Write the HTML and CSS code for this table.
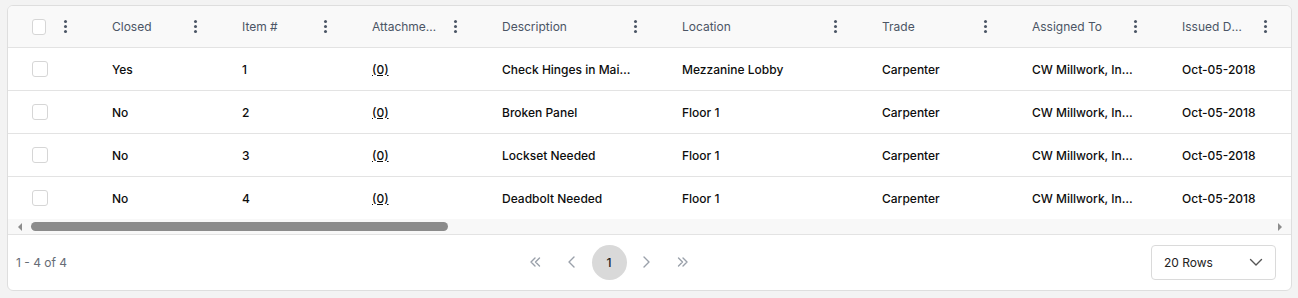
FILE: index.html
```html
<!DOCTYPE html>
<html lang="en">
<head>
    <meta charset="UTF-8">
    <meta name="viewport" content="width=device-width, initial-scale=1.0">
    <title>Punch List</title>
    <link rel="stylesheet" href="styles.css">
</head>
<body>
    <div class="card">
        <div class="table-wrap">
            <table class="grid">
                <colgroup>
                    <col class="w-check">
                    <col class="w-130">
                    <col class="w-130">
                    <col class="w-130">
                    <col class="w-180">
                    <col class="w-200">
                    <col class="w-150">
                    <col class="w-150">
                    <col class="w-130">
                    <col class="w-130">
                    <col class="w-150">
                    <col class="w-150">
                    <col class="w-200">
                </colgroup>
                <thead>
                    <tr>
                        <th class="check-cell">
                            <div class="head">
                                <span class="checkbox"></span>
                                <span class="dots"><i></i><i></i><i></i></span>
                            </div>
                        </th>
                        <th><div class="head"><span class="label">Closed</span><span class="dots"><i></i><i></i><i></i></span></div></th>
                        <th><div class="head"><span class="label">Item #</span><span class="dots"><i></i><i></i><i></i></span></div></th>
                        <th><div class="head"><span class="label">Attachments</span><span class="dots"><i></i><i></i><i></i></span></div></th>
                        <th><div class="head"><span class="label">Description</span><span class="dots"><i></i><i></i><i></i></span></div></th>
                        <th><div class="head"><span class="label">Location</span><span class="dots"><i></i><i></i><i></i></span></div></th>
                        <th><div class="head"><span class="label">Trade</span><span class="dots"><i></i><i></i><i></i></span></div></th>
                        <th><div class="head"><span class="label">Assigned To</span><span class="dots"><i></i><i></i><i></i></span></div></th>
                        <th><div class="head"><span class="label">Issued Date</span><span class="dots"><i></i><i></i><i></i></span></div></th>
                        <th><div class="head"><span class="label">Due Date</span><span class="dots"><i></i><i></i><i></i></span></div></th>
                        <th><div class="head"><span class="label">Status</span><span class="dots"><i></i><i></i><i></i></span></div></th>
                        <th><div class="head"><span class="label">Priority</span><span class="dots"><i></i><i></i><i></i></span></div></th>
                        <th><div class="head"><span class="label">Notes</span><span class="dots"><i></i><i></i><i></i></span></div></th>
                    </tr>
                </thead>
                <tbody>
                    <tr>
                        <td class="check-cell"><span class="checkbox"></span></td>
                        <td>Yes</td>
                        <td>1</td>
                        <td><a href="#" class="link">(0)</a></td>
                        <td>Check Hinges in Main Entrance</td>
                        <td>Mezzanine Lobby</td>
                        <td>Carpenter</td>
                        <td>CW Millwork, Inc. (Millwork)</td>
                        <td>Oct-05-2018</td>
                        <td>Oct-19-2018</td>
                        <td>Closed</td>
                        <td>Normal</td>
                        <td></td>
                    </tr>
                    <tr>
                        <td class="check-cell"><span class="checkbox"></span></td>
                        <td>No</td>
                        <td>2</td>
                        <td><a href="#" class="link">(0)</a></td>
                        <td>Broken Panel</td>
                        <td>Floor 1</td>
                        <td>Carpenter</td>
                        <td>CW Millwork, Inc. (Millwork)</td>
                        <td>Oct-05-2018</td>
                        <td>Oct-19-2018</td>
                        <td>Open</td>
                        <td>Normal</td>
                        <td></td>
                    </tr>
                    <tr>
                        <td class="check-cell"><span class="checkbox"></span></td>
                        <td>No</td>
                        <td>3</td>
                        <td><a href="#" class="link">(0)</a></td>
                        <td>Lockset Needed</td>
                        <td>Floor 1</td>
                        <td>Carpenter</td>
                        <td>CW Millwork, Inc. (Millwork)</td>
                        <td>Oct-05-2018</td>
                        <td>Oct-19-2018</td>
                        <td>Open</td>
                        <td>Normal</td>
                        <td></td>
                    </tr>
                    <tr>
                        <td class="check-cell"><span class="checkbox"></span></td>
                        <td>No</td>
                        <td>4</td>
                        <td><a href="#" class="link">(0)</a></td>
                        <td>Deadbolt Needed</td>
                        <td>Floor 1</td>
                        <td>Carpenter</td>
                        <td>CW Millwork, Inc. (Millwork)</td>
                        <td>Oct-05-2018</td>
                        <td>Oct-19-2018</td>
                        <td>Open</td>
                        <td>Normal</td>
                        <td></td>
                    </tr>
                </tbody>
            </table>
        </div>

        <!-- fake horizontal scrollbar -->
        <div class="hscroll">
            <span class="arrow arrow-left"></span>
            <div class="track"><div class="thumb"></div></div>
            <span class="arrow arrow-right"></span>
        </div>

        <div class="footer">
            <div class="count">1 - 4 of 4</div>
            <div class="pager">
                <button class="page-btn" title="First">
                    <svg width="14" height="14" viewBox="0 0 14 14"><path d="M7 3 3 7 7 11M11.5 3 7.5 7 11.5 11" fill="none" stroke="currentColor" stroke-width="1.4" stroke-linecap="round" stroke-linejoin="round"/></svg>
                </button>
                <button class="page-btn" title="Previous">
                    <svg width="14" height="14" viewBox="0 0 14 14"><path d="M9 2 4 7 9 12" fill="none" stroke="currentColor" stroke-width="1.4" stroke-linecap="round" stroke-linejoin="round"/></svg>
                </button>
                <button class="page-btn current">1</button>
                <button class="page-btn" title="Next">
                    <svg width="14" height="14" viewBox="0 0 14 14"><path d="M5 2 10 7 5 12" fill="none" stroke="currentColor" stroke-width="1.4" stroke-linecap="round" stroke-linejoin="round"/></svg>
                </button>
                <button class="page-btn" title="Last">
                    <svg width="14" height="14" viewBox="0 0 14 14"><path d="M2.5 3 6.5 7 2.5 11M7 3 11 7 7 11" fill="none" stroke="currentColor" stroke-width="1.4" stroke-linecap="round" stroke-linejoin="round"/></svg>
                </button>
            </div>
            <div class="rows-select">
                <span>20 Rows</span>
                <svg width="14" height="14" viewBox="0 0 14 14"><path d="M1.5 4.5 7 10 12.5 4.5" fill="none" stroke="currentColor" stroke-width="1.4" stroke-linecap="round" stroke-linejoin="round"/></svg>
            </div>
        </div>
    </div>
</body>
</html>
```

FILE: styles.css
```css
* {
    box-sizing: border-box;
}
body {
    font-family: Inter, 'Noto Sans', sans-serif;
    font-size: 12px;
    margin: 0;
    padding: 5px 6px 0 7px;
    background-color: #f3f3f3;
    color: #111;
}
.card {
    background-color: #fff;
    border: 1px solid #dedede;
    border-radius: 6px;
    overflow: hidden;
}
.table-wrap {
    overflow: hidden;
}
.grid {
    border-collapse: separate;
    border-spacing: 0;
    table-layout: fixed;
    width: 1910px;
}
.w-check { width: 80px; }
.w-130 { width: 130px; }
.w-150 { width: 150px; }
.w-180 { width: 180px; }
.w-200 { width: 200px; }
th {
    height: 42px;
    padding: 0 20px 0 24px;
    background-color: #f9f9f9;
    border-bottom: 1px solid #e3e3e3;
    font-weight: 400;
    text-align: left;
    color: #4b5565;
}
.head {
    display: flex;
    align-items: center;
    gap: 16px;
}
.head .label {
    flex: 1;
    min-width: 0;
    white-space: nowrap;
    overflow: hidden;
    text-overflow: ellipsis;
}
.check-cell .head {
    gap: 18px;
}
.dots {
    display: flex;
    flex-direction: column;
    gap: 2px;
    width: 4px;
    flex-shrink: 0;
}
.dots i {
    display: block;
    width: 3px;
    height: 3px;
    border-radius: 50%;
    background-color: #4b5565;
}
td {
    height: 43px;
    padding: 0 25px 0 24px;
    border-bottom: 1px solid #e3e3e3;
    font-weight: 500;
    color: #0d0d0d;
    white-space: nowrap;
    overflow: hidden;
    text-overflow: ellipsis;
}
tbody tr:last-child td {
    height: 42px;
    border-bottom: none;
}
.check-cell {
    padding-right: 20px;
}
.checkbox {
    display: inline-block;
    width: 16px;
    height: 16px;
    border: 1px solid #d6d6d6;
    border-radius: 3px;
    background-color: #fff;
    vertical-align: middle;
}
.link {
    color: #0d0d0d;
    text-decoration: underline;
}
.hscroll {
    display: flex;
    align-items: center;
    height: 16px;
    background-color: #f8f8f8;
    border-bottom: 1px solid #e3e3e3;
    padding: 0 8px;
}
.arrow {
    width: 0;
    height: 0;
    border-top: 4px solid transparent;
    border-bottom: 4px solid transparent;
}
.arrow-left {
    border-right: 4px solid #8c8c8c;
    margin-left: 2px;
}
.arrow-right {
    border-left: 4px solid #8c8c8c;
    margin-right: 1px;
}
.track {
    flex: 1;
    padding: 0 6px;
}
.thumb {
    width: 417px;
    height: 9px;
    border-radius: 5px;
    background-color: #8b8b8b;
    margin-left: 3px;
}
.footer {
    display: flex;
    align-items: center;
    justify-content: space-between;
    height: 55px;
    padding: 0 15px 1px 8px;
}
.count {
    color: #666c75;
    font-weight: 400;
}
.pager {
    display: flex;
    align-items: center;
    gap: 2px;
}
.page-btn {
    width: 35px;
    height: 35px;
    border: none;
    border-radius: 50%;
    background: none;
    color: #9aa0aa;
    padding: 0;
    display: flex;
    align-items: center;
    justify-content: center;
    font-family: inherit;
    font-size: 12px;
    cursor: pointer;
}
.page-btn.current {
    background-color: #d9d9d9;
    color: #222;
    font-weight: 500;
}
.rows-select {
    display: flex;
    align-items: center;
    justify-content: space-between;
    width: 125px;
    height: 35px;
    padding: 0 12px;
    border: 1px solid #dadada;
    border-radius: 4px;
    color: #222;
}
.rows-select svg {
    color: #555;
}
```
